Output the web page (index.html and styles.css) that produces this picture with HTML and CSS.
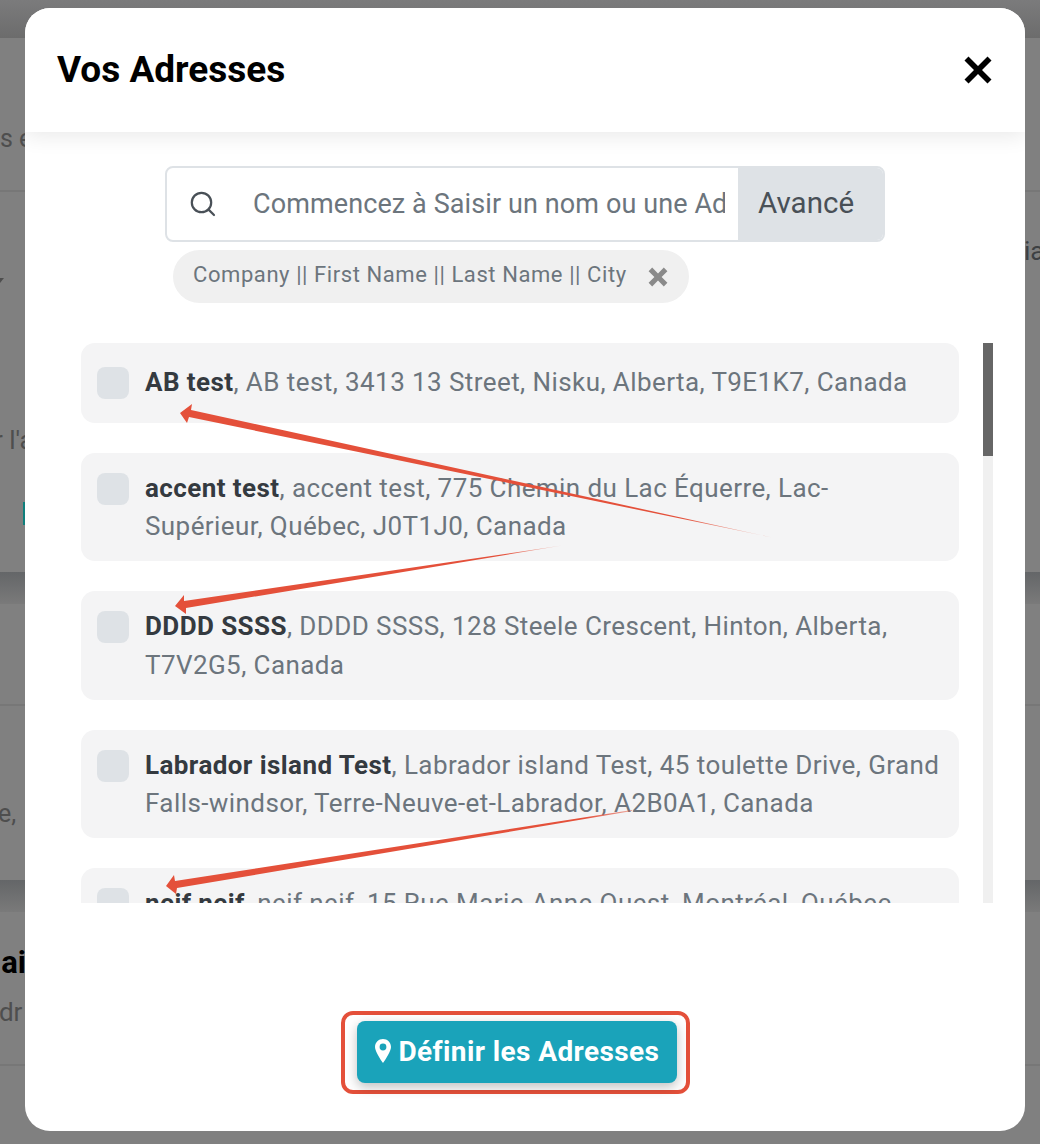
FILE: index.html
```html
<!DOCTYPE html>
<html lang="en">
<head>
    <meta charset="UTF-8">
    <meta name="viewport" content="width=device-width, initial-scale=1.0">
    <title>Vos Adresses</title>
    <link rel="stylesheet" href="styles.css">
</head>
<body>

    <!-- Page behind the modal, dimmed -->
    <div class="backdrop">
        <div class="band band-top"></div>
        <section class="card card-one">
            <div class="card-row row-intro">s e</div>
            <div class="card-split">
                <div class="side-left">
                    <span class="chevron"></span>
                    <span class="bg-text">r l'a</span>
                    <span class="bg-teal"></span>
                </div>
                <div class="side-right">
                    <span class="bg-text bg-dark">ia</span>
                </div>
            </div>
        </section>
        <div class="band"></div>
        <section class="card card-two">
            <div class="card-row row-short"></div>
            <div class="bg-text row-e">e,</div>
        </section>
        <div class="band"></div>
        <section class="card card-three">
            <div class="bg-title">Mai</div>
            <div class="bg-text bg-sub">Adr</div>
        </section>
    </div>

    <!-- Modal -->
    <div class="modal">
        <header class="modal-header">
            <h2>Vos Adresses</h2>
            <svg class="close-icon" viewBox="0 0 28 28">
                <path d="M4.5 0.5 14 10 23.5 0.5 27.500 4.500 18 14 27.500 23.500 23.500 27.500 14 18 4.500 27.500 0.500 23.500 10 14 0.500 4.500Z"/>
            </svg>
        </header>

        <div class="modal-body">
            <div class="search">
                <div class="search-box">
                    <svg class="search-icon" viewBox="0 0 26 26">
                        <circle cx="11.5" cy="11.5" r="9.7"/>
                        <path d="M18.6 18.6 24 24"/>
                    </svg>
                    <input type="text" class="search-input" placeholder="Commencez à Saisir un nom ou une Adresse">
                    <button type="button" class="search-btn">Avancé</button>
                </div>
                <div class="chip">
                    <span>Company || First Name || Last Name || City</span>
                    <svg class="chip-close" viewBox="0 0 20 20">
                        <path d="M4.200 0.600 10 6.400 15.800 0.600 19.400 4.200 13.600 10 19.400 15.800 15.800 19.400 10 13.600 4.200 19.400 0.600 15.800 6.400 10 0.600 4.200Z"/>
                    </svg>
                </div>
            </div>

            <div class="list-wrap">
                <ul class="address-list">
                    <li class="address single">
                        <span class="check"></span>
                        <p><b>AB test</b>, AB test, 3413 13 Street, Nisku, Alberta, T9E1K7, Canada</p>
                    </li>
                    <li class="address">
                        <span class="check"></span>
                        <p><b>accent test</b>, accent test, 775 Chemin du Lac Équerre, Lac-Supérieur, Québec, J0T1J0, Canada</p>
                    </li>
                    <li class="address">
                        <span class="check"></span>
                        <p><b>DDDD SSSS</b>, DDDD SSSS, 128 Steele Crescent, Hinton, Alberta, T7V2G5, Canada</p>
                    </li>
                    <li class="address">
                        <span class="check"></span>
                        <p><b>Labrador island Test</b>, Labrador island Test, 45 toulette Drive, Grand Falls-windsor, Terre-Neuve-et-Labrador, A2B0A1, Canada</p>
                    </li>
                    <li class="address">
                        <span class="check"></span>
                        <p><b>neif neif</b>, neif neif, 15 Rue Marie-Anne Ouest, Montréal, Québec, H2W1B6, Canada</p>
                    </li>
                </ul>
                <div class="scroll-track"><div class="scroll-thumb"></div></div>
            </div>
        </div>

        <footer class="modal-footer">
            <div class="red-outline">
                <button type="button" class="submit-btn">
                    <svg class="pin-icon" viewBox="0 0 16 24">
                        <path fill-rule="evenodd" d="M8 0C3.600 0 0 3.500 0 7.900 0 12 5.500 20.500 8 24c2.500-3.500 8-12 8-16.100C16 3.500 12.400 0 8 0Zm0 4.600a3.400 3.400 0 1 1 0 6.800 3.400 3.400 0 0 1 0-6.800Z"/>
                    </svg>
                    Définir les Adresses
                </button>
            </div>
        </footer>
    </div>

    <!-- Red arrows drawn on top of the screenshot -->
    <svg class="arrows" viewBox="0 0 1040 1144">
        <defs>
            <linearGradient id="fade1" gradientUnits="userSpaceOnUse" x1="181" y1="413" x2="770" y2="537">
                <stop offset="0.85" stop-color="#e4503a"/>
                <stop offset="1" stop-color="#e4503a" stop-opacity="0.3"/>
            </linearGradient>
            <linearGradient id="fade2" gradientUnits="userSpaceOnUse" x1="175" y1="606" x2="560" y2="546">
                <stop offset="0.85" stop-color="#e4503a"/>
                <stop offset="1" stop-color="#e4503a" stop-opacity="0.3"/>
            </linearGradient>
            <linearGradient id="fade3" gradientUnits="userSpaceOnUse" x1="166" y1="886" x2="630" y2="811">
                <stop offset="0.9" stop-color="#e4503a"/>
                <stop offset="1" stop-color="#e4503a" stop-opacity="0.5"/>
            </linearGradient>
        </defs>
        <polygon fill="url(#fade1)" points="180,413 192,404 191,410 772,537.500 189,417 187,423"/>
        <polygon fill="url(#fade2)" points="175,606 184,595 184,601 562,545.500 186,608 186,614"/>
        <polygon fill="url(#fade3)" points="166,886 174,875 175,881 632,810 632,811 177,888 176,894"/>
    </svg>

</body>
</html>
```

FILE: styles.css
```css
* {
    box-sizing: border-box;
}

body {
    font-family: Roboto, "Liberation Sans", sans-serif;
    margin: 0;
    padding: 0;
    width: 1040px;
    height: 1144px;
    overflow: hidden;
    background-color: #808080;
}

/* Dimmed page behind */
.backdrop {
    height: 1144px;
    overflow: hidden;
}

.band {
    height: 32px;
    background: linear-gradient(#646668, #7a7a7a);
}

.band-top {
    height: 38px;
    background: linear-gradient(#7b7b7c, #6c6c6c);
}

.card {
    background-color: #808080;
}

.card-one {
    height: 534px;
}

.card-two {
    height: 276px;
}

.card-three {
    height: 232px;
    padding-top: 32px;
}

.card-row {
    border-bottom: 2px solid #777;
}

.row-intro {
    height: 154px;
    padding-top: 86px;
    font-size: 25px;
    color: #4e4e4e;
}

.row-short {
    height: 102px;
}

.card-split {
    display: flex;
    justify-content: space-between;
}

.side-left {
    width: 25px;
    display: flex;
    flex-direction: column;
}

.side-right {
    padding-top: 44px;
    width: 15px;
    overflow: hidden;
}

.chevron {
    width: 0;
    height: 0;
    margin-top: 86px;
    border-top: 5px solid #4e4e4e;
    border-left: 4px solid transparent;
    border-right: 4px solid transparent;
    margin-left: -4px;
}

.bg-text {
    display: block;
    font-size: 25px;
    color: #4e4e4e;
    white-space: nowrap;
}

.bg-dark {
    color: #3d4043;
    font-size: 26px;
    margin-left: -1px;
}

.side-left .bg-text {
    margin-top: 142px;
    margin-left: -6px;
    font-size: 26px;
}

.bg-teal {
    width: 2px;
    height: 23px;
    margin: 47px 0 0 23px;
    background-color: #0f7f7c;
}

.row-e {
    margin: 93px 0 0 -2px;
}

.bg-title {
    font-size: 31px;
    font-weight: 700;
    color: #000;
    margin-left: -26px;
    white-space: nowrap;
}

.bg-sub {
    margin: 16px 0 0 -18px;
    padding-bottom: 37px;
    border-bottom: 2px solid #777;
    color: #4e4e4e;
    font-size: 26px;
}

/* Modal */
.modal {
    position: absolute;
    top: 8px;
    left: 25px;
    width: 1000px;
    height: 1123px;
    background: white;
    border-radius: 25px;
    overflow: hidden;
}

.modal-header {
    position: relative;
    height: 124px;
    padding: 0 33px 0 32px;
    display: flex;
    justify-content: space-between;
    align-items: center;
    background: white;
    box-shadow: 0 4px 20px rgba(0, 0, 0, 0.09);
}

.modal-header h2 {
    margin: -2px 0 0;
    font-size: 37px;
    font-weight: 700;
    color: #000;
}

.close-icon {
    width: 28px;
    height: 28px;
    fill: #000;
}

.modal-body {
    padding-top: 34px;
}

/* Search */
.search {
    width: 720px;
    margin-left: 140px;
}

.search-box {
    display: flex;
    height: 76px;
    border: 2px solid #dee2e6;
    border-radius: 8px;
    overflow: hidden;
}

.search-icon {
    width: 26px;
    height: 26px;
    margin: 23px 37px 0 23px;
    flex-shrink: 0;
    fill: none;
    stroke: #495057;
    stroke-width: 2.2;
    stroke-linecap: round;
}

.search-input {
    flex: 1;
    min-width: 0;
    border: 0;
    outline: 0;
    padding: 0 13px 0 0;
    font-family: inherit;
    font-size: 27px;
    letter-spacing: 0.1px;
    color: #6c757d;
}

.search-input::placeholder {
    color: #6c757d;
    opacity: 1;
}

.search-btn {
    width: 147px;
    margin: -2px -2px -2px 0;
    padding: 0 0 2px 20px;
    border: 0;
    background-color: #dee2e6;
    font-family: inherit;
    font-size: 29.5px;
    color: #495057;
    text-align: left;
}

.chip {
    display: inline-flex;
    align-items: center;
    gap: 21px;
    height: 53px;
    margin: 8px 0 0 8px;
    padding: 0 21px 0 20px;
    border-radius: 27px;
    background-color: #f0f0f0;
    font-size: 22px;
    letter-spacing: 0.58px;
    color: #6c757d;
}

.chip span {
    margin-top: -5px;
}

.chip-close {
    width: 20px;
    height: 20px;
    fill: #8a8a8a;
}

/* Address list */
.list-wrap {
    display: flex;
    height: 560px;
    margin: 40px 32px 0 56px;
    overflow: hidden;
}

.address-list {
    list-style: none;
    width: 878px;
    margin: 0;
    padding: 0;
    display: flex;
    flex-direction: column;
    gap: 30px;
}

.address {
    display: flex;
    flex-shrink: 0;
    align-items: flex-start;
    padding: 15.9px 16px 15.1px;
    border-radius: 14px;
    background-color: #f4f4f5;
}

.address.single {
    height: 79.7px;
    align-items: center;
    padding-top: 0;
    padding-bottom: 0;
}

.check {
    flex-shrink: 0;
    width: 32px;
    height: 32px;
    margin: 4px 16px 0 0;
    border-radius: 8px;
    background-color: #dee2e6;
}

.address.single .check {
    margin-top: 0;
}

.address.single p {
    margin-top: -1px;
}

.address p {
    margin: 0;
    font-size: 26px;
    line-height: 38.75px;
    letter-spacing: 0.42px;
    color: #6c757d;
}

.address b {
    font-weight: 700;
    color: #343a40;
}

.scroll-track {
    width: 10px;
    margin-left: 24px;
    background-color: #f0f0f0;
}

.scroll-thumb {
    height: 113px;
    background-color: #666;
}

/* Footer */
.modal-footer {
    display: flex;
    justify-content: center;
    padding: 108px 20px 0 0;
}

.red-outline {
    padding: 6px 9px 7px 12px;
    border: 4px solid #e4503a;
    border-radius: 12px;
}

.submit-btn {
    display: flex;
    align-items: center;
    gap: 8px;
    width: 320px;
    height: 62px;
    padding: 0 0 2px 18px;
    border: 0;
    border-radius: 8px;
    background-color: #1aa3ba;
    box-shadow: 0 4px 12px rgba(0, 0, 0, 0.25);
    font-family: inherit;
    font-size: 28px;
    font-weight: 700;
    letter-spacing: 0.4px;
    color: white;
    white-space: nowrap;
}

.pin-icon {
    width: 16px;
    height: 24px;
    fill: white;
}

.arrows {
    position: absolute;
    top: 0;
    left: 0;
    width: 1040px;
    height: 1144px;
    pointer-events: none;
}
```
